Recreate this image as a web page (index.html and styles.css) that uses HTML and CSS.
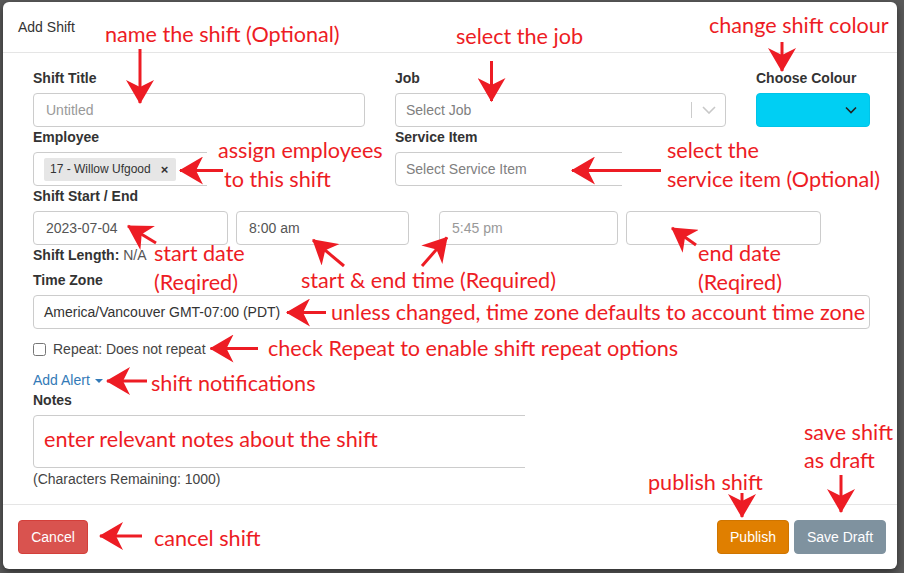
FILE: index.html
```html
<!DOCTYPE html>
<html>
<head>
<meta charset="utf-8">
<title>Add Shift</title>
<link rel="stylesheet" href="styles.css">
</head>
<body>
<div class="modal">
  <div class="modal-header"><span class="title">Add Shift</span></div>
  <div class="modal-body">
    <div class="grid-top">
      <div class="field">
        <label>Shift Title</label>
        <div class="input placeholder">Untitled</div>
      </div>
      <div class="field">
        <label>Job</label>
        <div class="input select">
          <span class="sel-text">Select Job</span>
          <span class="sep"></span>
          <span class="ind"><svg width="14" height="8" viewBox="0 0 14 8"><polyline points="1,1 7,7 13,1" fill="none" stroke="#c8c8c8" stroke-width="1.6"/></svg></span>
        </div>
      </div>
      <div class="field">
        <label>Choose Colour</label>
        <div class="colour"><svg width="12" height="8" viewBox="0 0 12 8"><polyline points="1,1.5 6,6.5 11,1.5" fill="none" stroke="#222" stroke-width="1.6"/></svg></div>
      </div>
      <div class="field">
        <label>Employee</label>
        <div class="input tags"><span class="tag">17 - Willow Ufgood<span class="x">×</span></span></div>
      </div>
      <div class="field">
        <label>Service Item</label>
        <div class="input select"><span class="sel-text">Select Service Item</span></div>
      </div>
      <div></div>
    </div>
    <div class="field">
      <label>Shift Start / End</label>
      <div class="dt-row">
        <div class="input d-start">2023-07-04</div>
        <div class="input t-start">8:00 am</div>
        <div class="input t-end placeholder">5:45 pm</div>
        <div class="input d-end"></div>
      </div>
    </div>
    <div class="length"><b>Shift Length:</b> <span class="na">N/A</span></div>
    <div class="field tz-field">
      <label>Time Zone</label>
      <div class="input tz">America/Vancouver GMT-07:00 (PDT)</div>
    </div>
    <label class="repeat"><input type="checkbox" class="chk"> Repeat: Does not repeat</label>
    <div class="alert-link">Add Alert <span class="caret"></span></div>
    <div class="field">
      <label>Notes</label>
      <div class="textarea"></div>
    </div>
    <div class="remaining">(Characters Remaining: 1000)</div>
  </div>
  <div class="modal-footer">
    <button class="btn btn-cancel">Cancel</button>
    <div class="btn-group">
      <button class="btn btn-publish">Publish</button>
      <button class="btn btn-draft">Save Draft</button>
    </div>
  </div>
</div>

<div class="cover cover-emp"></div>
<div class="cover cover-svc"></div>
<div class="cover cover-notes"></div>

<div class="ann a1">name the shift (Optional)</div>
<div class="ann a2">select the job</div>
<div class="ann a3">change shift colour</div>
<div class="ann a4a">assign employees</div>
<div class="ann a4b">to this shift</div>
<div class="ann a5a">select the</div>
<div class="ann a5b">service item (Optional)</div>
<div class="ann a6a">start date</div>
<div class="ann a6b">(Reqired)</div>
<div class="ann a7">start &amp; end time (Required)</div>
<div class="ann a8a">end date</div>
<div class="ann a8b">(Reqired)</div>
<div class="ann a9">unless changed, time zone defaults to account time zone</div>
<div class="ann a10">check Repeat to enable shift repeat options</div>
<div class="ann a11">shift notifications</div>
<div class="ann a12">enter relevant notes about the shift</div>
<div class="ann a13">cancel shift</div>
<div class="ann a14">publish shift</div>
<div class="ann a15a">save shift</div>
<div class="ann a15b">as draft</div>

<svg class="arrows" width="904" height="573" viewBox="0 0 904 573">
  <defs>
    <marker id="ah" viewBox="0 0 24 28" refX="23" refY="14" markerWidth="24" markerHeight="28" markerUnits="userSpaceOnUse" orient="auto">
      <path d="M0 0 L24 14 L0 28 L7 14 Z" fill="#ed1c24"/>
    </marker>
  </defs>
  <g stroke="#ed1c24" stroke-width="3" marker-end="url(#ah)">
    <line x1="140" y1="49" x2="140" y2="103"/>
    <line x1="491.5" y1="61" x2="491.5" y2="101"/>
    <line x1="782" y1="42" x2="782" y2="71"/>
    <line x1="223" y1="170.5" x2="180" y2="170.5"/>
    <line x1="661" y1="170.5" x2="572" y2="170.5"/>
    <line x1="156" y1="243" x2="128" y2="226"/>
    <line x1="344" y1="266" x2="313" y2="240"/>
    <line x1="422" y1="266" x2="447" y2="237.5"/>
    <line x1="696" y1="245" x2="672" y2="228"/>
    <line x1="326" y1="312.5" x2="287" y2="312.5"/>
    <line x1="258" y1="348.5" x2="210.5" y2="348.5"/>
    <line x1="147" y1="381" x2="107" y2="381"/>
    <line x1="142" y1="536" x2="100" y2="536"/>
    <line x1="742" y1="493" x2="742" y2="517"/>
    <line x1="841" y1="475" x2="841" y2="512"/>
  </g>
</svg>
</body>
</html>
```
FILE: styles.css
```css
* { box-sizing: border-box; }

body {
  margin: 0;
  width: 904px;
  height: 573px;
  overflow: hidden;
  position: relative;
  padding: 2px 0 0 3px;
  background: #5a5a5a;
  font-family: "Liberation Sans", Arial, sans-serif;
  font-size: 14px;
  color: #333;
}

.modal {
  width: 894px;
  background: #fff;
  border-radius: 6px;
  box-shadow: 0 3px 9px rgba(0, 0, 0, 0.5);
}

.modal-header {
  height: 51px;
  border-bottom: 1px solid #e5e5e5;
  padding: 0 15px;
  display: flex;
  align-items: center;
}

.modal-body {
  padding: 15px 27px 15px 30px;
}

.grid-top {
  display: grid;
  grid-template-columns: 332px 331px 114px;
  column-gap: 30px;
}

.field label {
  display: block;
  font-weight: bold;
  line-height: 20px;
  margin-bottom: 5px;
}

.input {
  height: 34px;
  border: 1px solid #ccc;
  border-radius: 4px;
  display: flex;
  align-items: center;
  padding: 0 12px;
  color: #555;
  background: #fff;
  white-space: nowrap;
}

.placeholder { color: #999; }

.select { padding: 0 0 0 10px; color: #808080; }
.sel-text { flex: 1; }
.sep { width: 1px; height: 16px; background: #ccc; }
.ind { width: 33px; display: flex; justify-content: center; align-items: center; }

.colour {
  height: 34px;
  border-radius: 4px;
  background: #00cff3;
  border: 1px solid #00c4e8;
  display: flex;
  align-items: center;
  justify-content: flex-end;
  padding-right: 12px;
}

.tags { padding-left: 10px; }
.tag {
  background: #e6e6e6;
  border-radius: 2px;
  height: 23px;
  display: flex;
  align-items: center;
  padding: 0 8px 0 6px;
  font-size: 12px;
  color: #333;
}
.tag .x { font-weight: bold; font-size: 13px; margin-left: 10px; color: #333; }

.dt-row { display: flex; }
.d-start { width: 195px; }
.t-start { width: 173px; margin-left: 8px; }
.t-end { width: 179px; margin-left: 30px; }
.d-end { width: 195px; margin-left: 8px; }

.length { line-height: 20px; }
.na { color: #555; }

.tz-field { margin-top: 5px; }
.tz { padding-left: 10px; color: #333; }

.repeat {
  display: flex;
  align-items: center;
  margin-top: 10px;
  line-height: 20px;
  color: #444;
}
.chk { width: 13px; height: 13px; margin: 0 7px 0 0; }

.alert-link {
  display: flex;
  align-items: center;
  margin-top: 11px;
  line-height: 20px;
  color: #337ab7;
}
.caret {
  width: 0;
  height: 0;
  margin-left: 5px;
  margin-top: 2px;
  border-top: 4px solid #337ab7;
  border-left: 4px solid transparent;
  border-right: 4px solid transparent;
}

.textarea {
  height: 53px;
  border: 1px solid #ccc;
  border-radius: 4px;
}

.remaining {
  margin-top: 1px;
  line-height: 20px;
  color: #444;
}

.modal-footer {
  border-top: 1px solid #e5e5e5;
  padding: 15px 11px 15px 15px;
  display: flex;
  justify-content: space-between;
}

.btn-group { display: flex; gap: 5px; }

.btn {
  height: 34px;
  border-radius: 4px;
  border: 1px solid transparent;
  color: #fff;
  font-family: "Liberation Sans", Arial, sans-serif;
  font-size: 14px;
  padding: 0;
}
.btn-cancel { width: 70px; background: #d9534f; border-color: #d43f3a; }
.btn-publish { width: 72px; background: #e07f00; border-color: #cf7500; }
.btn-draft { width: 92px; background: #7f929f; border-color: #7f929f; }

.cover { position: absolute; background: #fff; }
.cover-emp { left: 207px; top: 150px; width: 185px; height: 40px; }
.cover-svc { left: 622px; top: 148px; width: 268px; height: 42px; }
.cover-notes { left: 525px; top: 410px; width: 350px; height: 62px; }

.ann {
  position: absolute;
  font-family: Lato, "Liberation Sans", sans-serif;
  font-size: 21.6px;
  line-height: 1.2;
  color: #ed1c24;
  white-space: nowrap;
}
.a1 { left: 105px; top: 22px; }
.a2 { left: 456px; top: 24px; }
.a3 { left: 709px; top: 13px; }
.a4a { left: 218px; top: 138px; }
.a4b { left: 224px; top: 167px; }
.a5a { left: 667px; top: 138px; }
.a5b { left: 667px; top: 167px; }
.a6a { left: 154px; top: 241px; }
.a6b { left: 154px; top: 270px; }
.a7 { left: 301px; top: 268px; }
.a8a { left: 698px; top: 241px; }
.a8b { left: 698px; top: 270px; }
.a9 { left: 331px; top: 300px; }
.a10 { left: 268px; top: 336px; }
.a11 { left: 151px; top: 371px; }
.a12 { left: 44px; top: 427px; }
.a13 { left: 154px; top: 526px; }
.a14 { left: 648px; top: 470px; }
.a15a { left: 804px; top: 420px; }
.a15b { left: 804px; top: 448px; }

.arrows {
  position: absolute;
  left: 0;
  top: 0;
  pointer-events: none;
}
```
